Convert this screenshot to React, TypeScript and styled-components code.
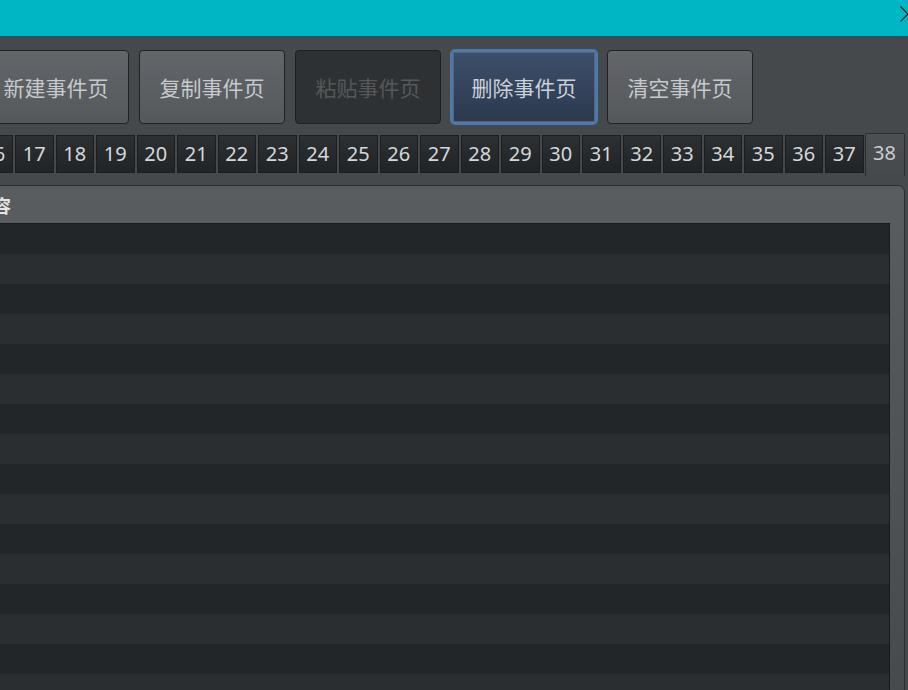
import React from "react";
import styled, { createGlobalStyle, css } from "styled-components";

const GlobalStyle = createGlobalStyle`
  html, body {
    margin: 0;
    padding: 0;
    background: #46494c;
    overflow: hidden;
  }
  * { box-sizing: border-box; }
`;

const FONT = `"Noto Sans", "Noto Sans CJK SC", sans-serif`;

const Window = styled.div`
  width: 908px;
  height: 690px;
  overflow: hidden;
  background: #46494c;
  display: flex;
  flex-direction: column;
  font-family: ${FONT};
`;

const TitleBar = styled.div`
  height: 36px;
  flex: 0 0 36px;
  background: #00b5c4;
  display: flex;
  justify-content: flex-end;
  align-items: flex-start;
  padding-top: 6px;
`;

const CloseIcon = styled.svg`
  width: 16px;
  height: 16px;
  margin-right: -8px;
  flex: 0 0 auto;
`;

const Toolbar = styled.div`
  display: flex;
  gap: 10px;
  margin-top: 14px;
  margin-left: -17px;
  flex: 0 0 auto;
`;

type BtnVariant = "normal" | "disabled" | "focused";

const ToolButton = styled.button<{ $variant: BtnVariant }>`
  width: 146px;
  height: 74px;
  flex: 0 0 146px;
  border-radius: 4px;
  font-family: ${FONT};
  font-size: 21px;
  padding: 0;
  display: flex;
  align-items: center;
  justify-content: center;
  cursor: default;
  ${({ $variant }) =>
    $variant === "normal"
      ? css`
          border: 1px solid #1f2123;
          background: linear-gradient(#626569, #56595c);
          color: #c6cacd;
        `
      : $variant === "disabled"
      ? css`
          border: 1px solid #1c1e20;
          background: #2e3134;
          color: #55585b;
        `
      : css`
          border: 2px solid #4d7aab;
          box-shadow: 0 0 0 1px #4d7aab, inset 0 0 0 1px #56627a;
          background: linear-gradient(#3d4f6a, #2c394e);
          color: #cbd1d8;
        `}
`;

const TabBar = styled.div`
  display: flex;
  align-items: flex-start;
  gap: 2px;
  margin-top: 9px;
  margin-left: -25.5px;
  height: 43px;
  flex: 0 0 43px;
`;

const Tab = styled.div<{ $active?: boolean }>`
  flex: 0 0 auto;
  display: flex;
  align-items: center;
  justify-content: center;
  font-family: ${FONT};
  font-size: 20px;
  ${({ $active }) =>
    $active
      ? css`
          width: 40px;
          height: 43px;
          margin-left: -1px;
          border: 1px solid #2a2c2e;
          border-bottom: none;
          border-radius: 2px 2px 0 0;
          background: linear-gradient(#4d5053, #46494c);
          color: #c9cdd0;
          padding-bottom: 5px;
        `
      : css`
          width: 38.5px;
          height: 38px;
          margin-top: 2px;
          border: 1px solid #1b1d1f;
          background: linear-gradient(#2d3033, #212426);
          color: #d4d8db;
          padding-bottom: 2px;
        `}
`;

const Panel = styled.div`
  margin-top: 9px;
  margin-left: -100px;
  width: 1005px;
  height: 540px;
  flex: 0 0 auto;
  border: 1px solid #2a2c2e;
  border-radius: 7px;
  background: linear-gradient(#5a5d60 0px, #585b5e 60px, #46494c 540px);
  display: flex;
  flex-direction: column;
  padding: 0 14px 0 14px;
`;

const PanelTitle = styled.div`
  height: 37px;
  flex: 0 0 37px;
  padding-left: 24px;
  padding-top: 3px;
  line-height: 34px;
  font-family: ${FONT};
  font-size: 18px;
  font-weight: bold;
  color: #e2e4e6;
  white-space: nowrap;
`;

const List = styled.div`
  flex: 1;
  border: 1px solid #17191b;
  border-bottom: none;
  display: flex;
  flex-direction: column;
  overflow: hidden;
`;

const Row = styled.div<{ $alt: boolean }>`
  height: 30px;
  flex: 0 0 30px;
  background: ${({ $alt }) => ($alt ? "#2b2e31" : "#232628")};
`;

const buttons: { label: string; variant: BtnVariant }[] = [
  { label: "新建事件页", variant: "normal" },
  { label: "复制事件页", variant: "normal" },
  { label: "粘贴事件页", variant: "disabled" },
  { label: "删除事件页", variant: "focused" },
  { label: "清空事件页", variant: "normal" },
];

const tabs = Array.from({ length: 23 }, (_, i) => i + 16);

export default function App() {
  return (
    <>
      <GlobalStyle />
      <Window>
        <TitleBar>
          <CloseIcon viewBox="0 0 16 16">
            <path d="M0.5 0.5 L15.5 15.5 M15.5 0.5 L0.5 15.5" stroke="#111" strokeWidth="1.1" fill="none" />
          </CloseIcon>
        </TitleBar>
        <Toolbar>
          {buttons.map((b) => (
            <ToolButton key={b.label} $variant={b.variant} disabled={b.variant === "disabled"}>
              {b.label}
            </ToolButton>
          ))}
        </Toolbar>
        <TabBar>
          {tabs.map((t) => (
            <Tab key={t} $active={t === 38}>
              {t}
            </Tab>
          ))}
        </TabBar>
        <Panel>
          <PanelTitle>事件内容</PanelTitle>
          <List>
            {Array.from({ length: 17 }, (_, i) => (
              <Row key={i} $alt={i % 2 === 1} />
            ))}
          </List>
        </Panel>
      </Window>
    </>
  );
}
